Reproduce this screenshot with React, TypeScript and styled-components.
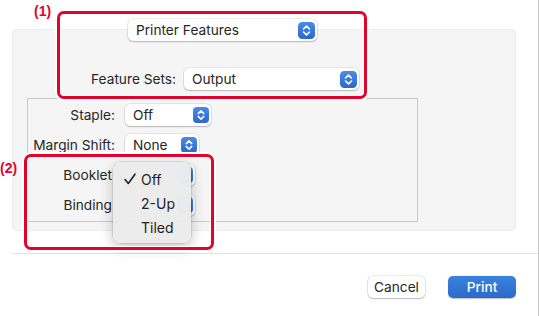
import React from 'react';
import styled, {createGlobalStyle} from 'styled-components';

const GlobalStyle = createGlobalStyle`
  html, body {
    margin: 0;
    padding: 0;
    background: #ffffff;
  }
  body {
    font-family: Inter, "Liberation Sans", Arial, sans-serif;
    color: #262626;
  }
`;

const RED = '#e3022c';

const Window = styled.div`
  position: relative;
  width: 539px;
  height: 316px;
  box-sizing: border-box;
  background: #fff;
  border-right: 1px solid #c6c6c6;
  overflow: hidden;
  font-size: 13.7px;
`;

const Content = styled.div`
  padding-left: 12px;
`;

const Header = styled.div`
  padding-top: 19px;
  padding-left: 116px;
  position: relative;
  z-index: 1;
`;

const Panel = styled.div`
  margin-top: -12px;
  margin-right: 22px;
  height: 202px;
  box-sizing: border-box;
  background: #f5f5f5;
  border: 1px solid #ececec;
  border-radius: 5px;
  padding-top: 38px;
`;

const FieldRow = styled.div`
  display: flex;
  align-items: center;
  gap: 8px;
`;

const Label = styled.div<{$width?: number}>`
  width: ${p => (p.$width ? `${p.$width}px` : 'auto')};
  text-align: right;
  white-space: nowrap;
  overflow: hidden;
`;

const Popup = styled.div<{$width: number}>`
  width: ${p => p.$width}px;
  height: 22px;
  box-sizing: border-box;
  display: flex;
  align-items: center;
  justify-content: space-between;
  padding: 0 2px 0 8px;
  background: #fff;
  border-radius: 5px;
  box-shadow: 0 0 0 0.5px rgba(0, 0, 0, 0.14), 0 1px 1.5px rgba(0, 0, 0, 0.2);
  white-space: nowrap;
`;

const InnerBox = styled.div`
  margin-top: 8px;
  margin-left: 14px;
  width: 391px;
  height: 124px;
  box-sizing: border-box;
  border: 1px solid #c9c9c9;
  padding-top: 5px;
  display: grid;
  grid-template-columns: 87px auto;
  grid-auto-rows: 22px;
  column-gap: 10px;
  row-gap: 8px;
  align-items: center;
  justify-items: start;
`;

const GridLabel = styled.div<{$trim?: boolean}>`
  justify-self: end;
  white-space: nowrap;
  padding-right: ${p => (p.$trim ? '3px' : '0')};
`;

const Divider = styled.div`
  margin: 22px 0 0 12px;
  height: 1px;
  background: #e2e2e2;
`;

const Footer = styled.div`
  display: flex;
  justify-content: flex-end;
  gap: 23px;
  padding: 22px 22px 0 0;
`;

const Button = styled.div<{$primary?: boolean; $width: number}>`
  width: ${p => p.$width}px;
  height: 22px;
  box-sizing: border-box;
  display: flex;
  align-items: center;
  justify-content: center;
  border-radius: 5px;
  font-size: 13.7px;
  ${p => p.$primary
    ? `background: linear-gradient(#3a82e0, #2b6ac8);
       color: #fff;
       font-weight: 500;
       box-shadow: 0 0.5px 1px rgba(0,0,0,0.25);`
    : `background: #fff;
       color: #262626;
       box-shadow: 0 0 0 0.5px rgba(0,0,0,0.16), 0 1px 1.5px rgba(0,0,0,0.2);`}
`;

const Callout = styled.div<{$left: number; $top: number; $w: number; $h: number}>`
  position: absolute;
  left: ${p => p.$left}px;
  top: ${p => p.$top}px;
  width: ${p => p.$w}px;
  height: ${p => p.$h}px;
  box-sizing: border-box;
  border: 3px solid ${RED};
  border-radius: 7px;
  box-shadow: 0 0 0 2px #fff, inset 0 0 0 1px #fff;
  z-index: 5;
`;

const CalloutTag = styled.div<{$left: number; $top: number}>`
  position: absolute;
  left: ${p => p.$left}px;
  top: ${p => p.$top}px;
  color: ${RED};
  font-family: "Liberation Sans", Arial, sans-serif;
  font-weight: bold;
  font-size: 14px;
  z-index: 6;
`;

const Menu = styled.div`
  position: absolute;
  left: 113px;
  top: 162px;
  width: 78px;
  height: 81px;
  box-sizing: border-box;
  padding-top: 5px;
  background: rgba(236, 236, 236, 0.98);
  border-radius: 7px;
  box-shadow: 0 0 0 0.5px rgba(0, 0, 0, 0.18), 0 5px 14px rgba(0, 0, 0, 0.22);
  z-index: 4;
`;

const MenuItem = styled.div`
  position: relative;
  height: 24px;
  display: flex;
  align-items: center;
  padding-left: 28px;
  font-size: 14px;
  color: #222;
`;

const Check = styled.svg`
  position: absolute;
  left: 11px;
  top: 6px;
`;

function Arrows({size = 16}: {size?: number}) {
  return (
    <svg width={size} height={size} viewBox="0 0 16 16">
      <defs>
        <linearGradient id="arrowBg" x1="0" y1="0" x2="0" y2="1">
          <stop offset="0" stopColor="#4a8ae8"/>
          <stop offset="1" stopColor="#2b68cc"/>
        </linearGradient>
      </defs>
      <rect x="0" y="0" width="16" height="16" rx="4" fill="url(#arrowBg)"/>
      <path d="M5.2 6.6 L8 3.9 L10.8 6.6 M5.2 9.4 L8 12.1 L10.8 9.4"
            fill="none" stroke="#fff" strokeWidth="1.5" strokeLinecap="round" strokeLinejoin="round"/>
    </svg>
  );
}

function Select({value, width, icon = 16}: {value: string; width: number; icon?: number}) {
  return (
    <Popup $width={width}>
      <span>{value}</span>
      <Arrows size={icon}/>
    </Popup>
  );
}

export default function App() {
  // the Booklet / Binding popups sit under the open menu, so their values are hidden
  const rows = [
    {label: 'Staple:', value: 'Off', width: 86, covered: false},
    {label: 'Margin Shift:', value: 'None', width: 74, covered: false},
    {label: 'Booklet', value: '', width: 70, covered: true},
    {label: 'Binding', value: '', width: 70, covered: true},
  ];
  return (
    <Window>
      <GlobalStyle/>
      <Content>
        <Header>
          <Select value="Printer Features" width={189} icon={17}/>
        </Header>
        <Panel>
          <FieldRow>
            <Label $width={163}>Feature Sets:</Label>
            <Select value="Output" width={175} icon={17}/>
          </FieldRow>
          <InnerBox>
            {rows.map(r => (
              <React.Fragment key={r.label}>
                <GridLabel $trim={r.covered}>{r.label}</GridLabel>
                <Select value={r.value} width={r.width}/>
              </React.Fragment>
            ))}
          </InnerBox>
        </Panel>
      </Content>
      <Divider/>
      <Footer>
        <Button $width={57}>Cancel</Button>
        <Button $width={68} $primary>Print</Button>
      </Footer>

      <Menu>
        <MenuItem>
          <Check width="12" height="12" viewBox="0 0 12 12">
            <path d="M1 6.5 L4.3 10.5 L11 1.2" fill="none" stroke="#222" strokeWidth="1.6"
                  strokeLinecap="round" strokeLinejoin="round"/>
          </Check>
          Off
        </MenuItem>
        <MenuItem>2-Up</MenuItem>
        <MenuItem>Tiled</MenuItem>
      </Menu>

      <Callout $left={57} $top={11} $w={310} $h={88}/>
      <CalloutTag $left={34} $top={3}>(1)</CalloutTag>
      <Callout $left={24} $top={154} $w={190} $h={96}/>
      <CalloutTag $left={0} $top={160}>(2)</CalloutTag>
    </Window>
  );
}
